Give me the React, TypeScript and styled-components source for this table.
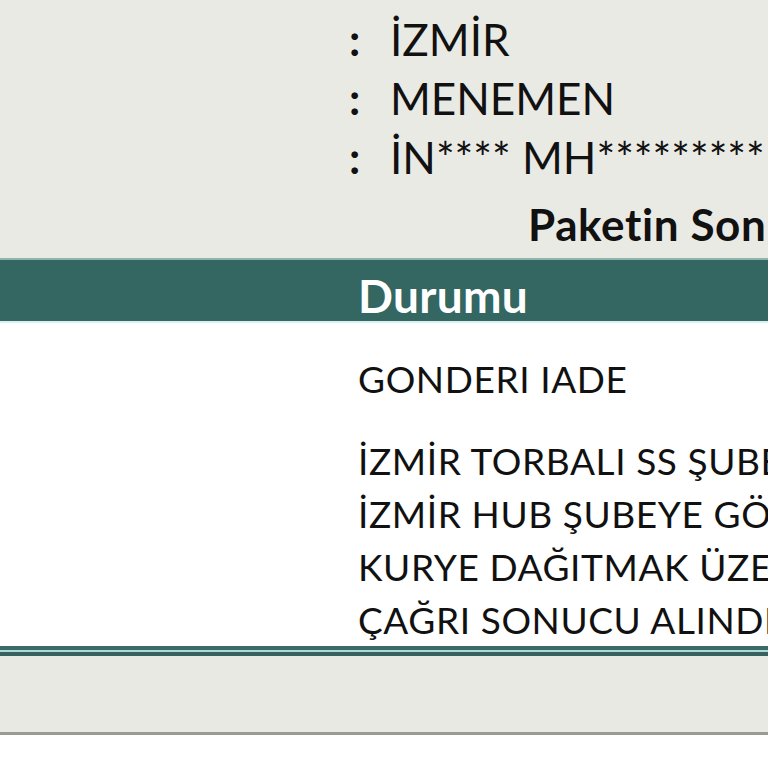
import React from "react";
import styled, { createGlobalStyle } from "styled-components";

const GlobalStyle = createGlobalStyle`
  html, body { margin: 0; padding: 0; background: #ffffff; overflow: hidden; }
  body { font-family: "Lato", "Noto Sans", sans-serif; color: #111; }
`;

const Page = styled.div`
  width: 768px;
  overflow: hidden;
`;

const InfoSection = styled.section`
  background: #eaeae5;
  height: 258px;
  box-sizing: border-box;
  padding-top: 9px;
`;

const InfoRow = styled.div`
  display: grid;
  grid-template-columns: 349px 41px 1fr;
  height: 59px;
  align-items: center;
  font-size: 44px;
  white-space: nowrap;
`;

const Colon = styled.span`
  font-weight: 700;
`;

const Value = styled.span`
  font-weight: 400;
`;

const SectionTitle = styled.h2`
  margin: 9px 0 0;
  padding-left: 528px;
  font-size: 44px;
  font-weight: 700;
  letter-spacing: 0.6px;
  white-space: nowrap;
  line-height: 59px;
`;

const Table = styled.div`
  display: grid;
  grid-template-columns: 358px 1fr;
`;

const HeaderRow = styled.div`
  grid-column: 1 / -1;
  display: grid;
  grid-template-columns: 358px 1fr;
  height: 65px;
  box-sizing: border-box;
  background: #346662;
  border-top: 2px solid #8fb3ae;
  border-bottom: 2px solid #d8f0ef;
  align-items: center;
  color: #ffffff;
  font-size: 46px;
  font-weight: 700;
`;

const HeaderCell = styled.div`
  white-space: nowrap;
  padding-top: 8px;
  letter-spacing: 0.3px;
`;

const Body = styled.div`
  grid-column: 1 / -1;
  display: grid;
  grid-template-columns: 358px 1fr;
  background: #ffffff;
  padding-top: 29px;
  padding-bottom: 0;
`;

const Cell = styled.div<{ $gap?: number }>`
  font-size: 37px;
  line-height: 53px;
  letter-spacing: 0.6px;
  white-space: nowrap;
  margin-bottom: ${(p) => p.$gap ?? 0}px;
`;

const BottomBorder = styled.div`
  height: 10px;
  background: linear-gradient(
    to bottom,
    #3d6a66 0px,
    #3d6a66 4px,
    #a8dcd6 4px,
    #a8dcd6 6px,
    #38605c 6px,
    #38605c 10px
  );
`;

const Footer = styled.div`
  height: 76px;
  background: #e9e9e4;
  border-bottom: 3px solid #9a9a93;
`;

export default function App() {
  const info = ["İZMİR", "MENEMEN", "İN**** MH*********"];
  const events = [
    "İZMİR TORBALI SS ŞUBESİNE ULAŞTI",
    "İZMİR HUB ŞUBEYE GÖNDERİLDİ",
    "KURYE DAĞITMAK ÜZERE ÇIKARDI",
    "ÇAĞRI SONUCU ALINDI",
  ];
  return (
    <Page>
      <GlobalStyle />
      <InfoSection>
        {info.map((v) => (
          <InfoRow key={v}>
            <span />
            <Colon>:</Colon>
            <Value>{v}</Value>
          </InfoRow>
        ))}
        <SectionTitle>Paketin Son Hareketleri</SectionTitle>
      </InfoSection>
      <Table>
        <HeaderRow>
          <HeaderCell />
          <HeaderCell>Durumu</HeaderCell>
        </HeaderRow>
        <Body>
          <span />
          <Cell $gap={29}>GONDERI IADE</Cell>
          {events.map((e) => (
            <React.Fragment key={e}>
              <span />
              <Cell>{e}</Cell>
            </React.Fragment>
          ))}
        </Body>
      </Table>
      <BottomBorder />
      <Footer />
    </Page>
  );
}
